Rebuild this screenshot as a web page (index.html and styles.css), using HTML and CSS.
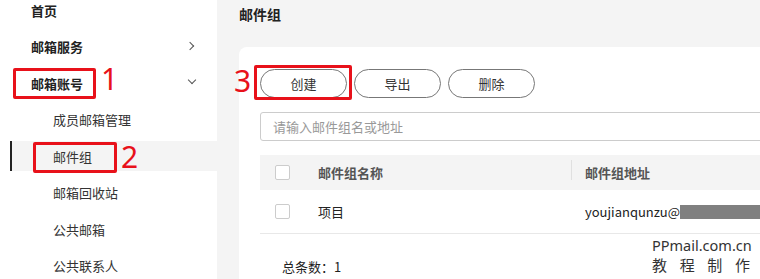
FILE: index.html
```html
<!DOCTYPE html>
<html lang="zh-CN">
<head>
<meta charset="utf-8">
<title>邮件组</title>
<link rel="stylesheet" href="styles.css">
</head>
<body>
<div class="app">
  <aside class="sidebar">
    <ul class="nav">
      <li class="item top"><span class="link">首页</span></li>
      <li class="item top"><span class="link">邮箱服务<span class="chev right"></span></span></li>
      <li class="item top"><span class="link">邮箱账号<span class="chev down"></span></span></li>
      <li class="item sub"><span class="link">成员邮箱管理</span></li>
      <li class="item sub"><span class="link active">邮件组</span></li>
      <li class="item sub"><span class="link">邮箱回收站</span></li>
      <li class="item sub"><span class="link">公共邮箱</span></li>
      <li class="item sub"><span class="link">公共联系人</span></li>
    </ul>
    <div class="mark mark1"></div><span class="num num1">1</span>
    <div class="mark mark2"></div><span class="num num2">2</span>
  </aside>
  <main class="main">
    <h1 class="title">邮件组</h1>
    <section class="card">
      <div class="toolbar">
        <button class="btn">创建</button>
        <button class="btn">导出</button>
        <button class="btn">删除</button>
      </div>
      <div class="search">请输入邮件组名或地址</div>
      <div class="table">
        <div class="row head">
          <span class="cell chk"><span class="box"></span></span>
          <span class="cell name">邮件组名称</span>
          <span class="cell addr"><span class="sep"></span>邮件组地址</span>
        </div>
        <div class="row body">
          <span class="cell chk"><span class="box"></span></span>
          <span class="cell name">项目</span>
          <span class="cell addr">youjianqunzu@<span class="redact"></span></span>
        </div>
      </div>
      <div class="total">总条数：1</div>
      <div class="mark mark3"></div><span class="num num3">3</span>
      <div class="wm"><div class="wm1">PPmail.com.cn</div><div class="wm2"><span>教</span><span>程</span><span>制</span><span>作</span></div></div>
    </section>
  </main>
</div>
</body>
</html>
```
FILE: styles.css
```css
* { box-sizing: border-box; margin: 0; padding: 0; }
html, body { width: 760px; height: 279px; overflow: hidden; }
body {
  font-family: "Noto Sans CJK SC", "Noto Sans", sans-serif;
  font-size: 13px;
  color: #333;
  background: #fff;
}
.app { display: flex; height: 279px; overflow: hidden; }
.sidebar {
  position: relative;
  width: 217px;
  flex: none;
  background: #fff;
}
.nav { list-style: none; margin-top: -8px; }
.item { height: 36.5px; display: flex; align-items: center; }
.link {
  display: flex; align-items: center;
  width: 100%; height: 30px;
  position: relative;
}
.top .link { padding-left: 31px; font-weight: bold; color: #222; }
.sub .link { margin-left: 10px; padding-left: 43px; color: #333; }
.link.active { background: #f4f4f4; border-left: 2px solid #222; padding-left: 41px; }
.chev {
  position: absolute; left: 189px; top: 11px;
  width: 6px; height: 6px;
  border-right: 1px solid #555; border-bottom: 1px solid #555;
}
.chev.right { transform: rotate(-45deg); left: 187px; }
.chev.down { transform: rotate(45deg); top: 9px; }
.mark { position: absolute; border: 3px solid #e8111a; border-radius: 2px; }
.num {
  position: absolute; color: #e8111a;
  font-family: "Noto Sans", sans-serif; font-size: 30px; line-height: 30px;
}
.mark1 { left: 13px; top: 68px; width: 83px; height: 31px; }
.num1 { left: 101px; top: 64px; }
.mark2 { left: 33px; top: 142px; width: 84px; height: 31px; }
.num2 { left: 121px; top: 142px; }
.main {
  flex: 1;
  background: #f4f4f4;
  padding-left: 22px;
  min-width: 0;
  overflow: hidden;
}
.title { font-size: 14px; font-weight: bold; color: #222; height: 47px; padding-top: 4px; line-height: 20px; }
.card {
  position: relative;
  background: #fff;
  border-top-left-radius: 8px;
  height: 232px;
  padding: 22px 0 0 21px;
}
.toolbar { display: flex; gap: 7px; }
.btn {
  width: 87px; height: 29px;
  border: 1px solid #777; border-radius: 15px;
  background: #fff; color: #333;
  font-family: inherit; font-size: 13px;
}
.search {
  margin-top: 14px;
  height: 29px; width: 560px;
  border: 1px solid #ccc; border-radius: 3px;
  padding-left: 12px;
  color: #999; line-height: 27px; font-size: 13px;
}
.table { margin-top: 14px; width: 560px; }
.row { display: flex; align-items: center; }
.row.head { height: 35px; background: #f4f4f4; color: #555; font-weight: bold; }
.row.body { height: 44px; border-bottom: 1px solid #e8e8e8; color: #222; }
.cell { display: flex; align-items: center; }
.chk { width: 58px; padding-left: 15px; }
.box { width: 15px; height: 15px; border: 1px solid #ccc; border-radius: 2px; background: #fff; }
.name { width: 253px; }
.addr { position: relative; padding-left: 14px; }
.sep { position: absolute; left: 0; top: -3px; width: 1px; height: 20px; background: #e0e0e0; }
.redact { display: inline-block; width: 85px; height: 14px; background: #808080; }
.total { margin-top: 23px; padding-left: 22px; font-size: 13px; color: #222; }
.mark3 { left: 15px; top: 18px; width: 98px; height: 35px; }
.num3 { left: -5px; top: 19px; }
.wm { position: absolute; left: 413px; top: 188px; width: 100px; color: #333; white-space: nowrap; }
.wm1 { font-family: "Noto Sans", sans-serif; font-size: 14.5px; line-height: 20px; }
.wm2 { display: flex; justify-content: space-between; width: 98px; font-size: 15px; line-height: 20px; }
```
